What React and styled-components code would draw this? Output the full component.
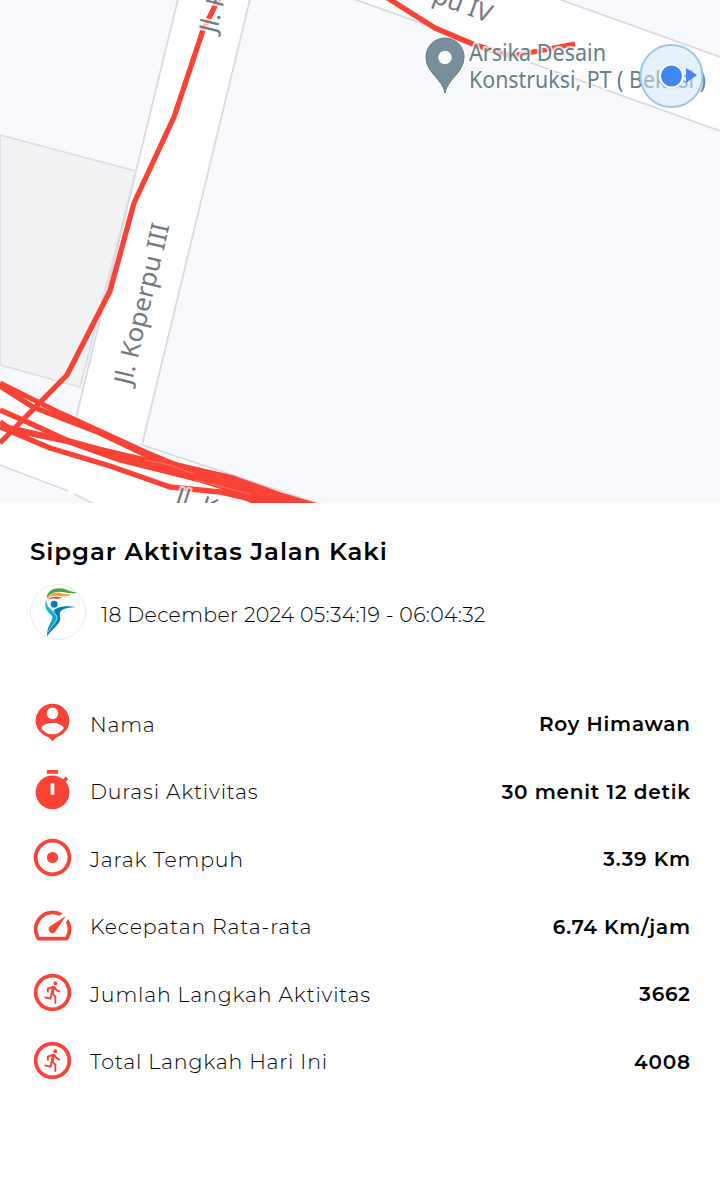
import React from "react";
import styled, { createGlobalStyle } from "styled-components";
import { MdOutlineRunCircle } from "react-icons/md";

const GlobalStyle = createGlobalStyle`
  * { box-sizing: border-box; }
  body { margin: 0; background: #fff; font-family: Montserrat, Inter, "Liberation Sans", sans-serif; color: #000; }
`;

const Screen = styled.main`
  display: flex;
  flex-direction: column;
  width: 720px;
  height: 1202px;
  overflow: hidden;
  background: #fff;
`;

const MapArea = styled.svg`
  display: block;
  flex: none;
  width: 720px;
  height: 503px;
  background: #f8f9fc;
`;

const Details = styled.section`
  display: flex;
  flex-direction: column;
  padding: 32px 30px 0;
`;

const Title = styled.h1`
  margin: 0;
  height: 32px;
  font-size: 24.5px;
  line-height: 32px;
  font-weight: 600;
  letter-spacing: 0.9px;
  white-space: nowrap;
`;

const Session = styled.div`
  display: flex;
  align-items: center;
  gap: 15px;
  height: 56px;
  margin-top: 17px;
`;

const Avatar = styled.svg`
  flex: none;
  width: 56px;
  height: 56px;
`;

const SessionTime = styled.span`
  padding-top: 4px;
  font-size: 20.5px;
  font-weight: 300;
  letter-spacing: ${(p) => p.$spacing}px;
  white-space: nowrap;
`;

const Stats = styled.ul`
  display: flex;
  flex-direction: column;
  gap: 22.5px;
  margin: 60px 0 0;
  padding: 0;
  list-style: none;
`;

const Stat = styled.li`
  display: flex;
  align-items: center;
  height: 45px;
`;

const IconBox = styled.span`
  display: flex;
  flex: none;
  width: 45px;
  height: 45px;
  margin-right: 15px;
  color: #f94336;
  svg { width: 45px; height: 45px; fill: currentColor; }
`;

const Label = styled.span`
  padding-top: 3px;
  font-size: 20.5px;
  font-weight: 300;
  letter-spacing: ${(p) => p.$spacing}px;
  white-space: nowrap;
`;

const Value = styled.span`
  margin-left: auto;
  padding-top: 3px;
  font-size: 20px;
  font-weight: 600;
  letter-spacing: ${(p) => p.$spacing}px;
  margin-right: ${(p) => -p.$spacing}px;
  white-space: nowrap;
`;

const PersonIcon = () => (
  <svg viewBox="0 0 24 24">
    <path fillRule="evenodd" d="M12 2a9 9 0 0 0-9 9c0 4.2 2.9 7.6 6.9 8.8L12 22l2.1-2.2C18.100 18.600 21 15.200 21 11a9 9 0 0 0-9-9ZM12 4a3 3 0 1 1 0 6.200A3 3 0 0 1 12 4ZM12 12.200c2.700 0 5.700 1.100 6 2.800-1.300 2-3.500 3.300-6 3.300S7.300 17 6 15c.3-1.700 3.300-2.800 6-2.800Z" />
  </svg>
);

const TimerIcon = () => (
  <svg viewBox="0 0 24 24">
    <path d="M19.030 7.390 20.450 5.970C20 5.460 19.550 5 19.040 4.560L17.620 6C16.070 4.740 14.120 4 12 4a9 9 0 1 0 9 9c0-2.120-.74-4.070-1.970-5.610ZM13 14.200h-2V8.100h2ZM15 1H9v2h6Z" fillRule="evenodd" />
  </svg>
);

const DistanceIcon = () => (
  <svg viewBox="0 0 24 24">
    <path fillRule="evenodd" d="M12 2a10 10 0 1 0 0 20 10 10 0 0 0 0-20Zm0 18a8 8 0 1 1 0-16 8 8 0 0 1 0 16Z" />
    <circle cx="12" cy="12" r="3" />
  </svg>
);

const SpeedIcon = () => (
  <svg viewBox="0 0 24 24">
    <path d="M20.380 8.570l-1.230 1.850a8 8 0 0 1-.22 7.580H5.070A8 8 0 0 1 15.580 6.850l1.850-1.230A10 10 0 0 0 3.350 19a2 2 0 0 0 1.720 1h13.850a2 2 0 0 0 1.740-1 10 10 0 0 0-.27-10.440Z" />
    <path d="M10.590 15.410a2 2 0 0 0 2.830 0l5.660-8.490-8.490 5.660a2 2 0 0 0 0 2.830Z" />
  </svg>
);

const Logo = () => (
  <Avatar viewBox="0 0 56 56">
    <defs>
      <linearGradient id="body" x1="0" y1="0" x2="0" y2="1">
        <stop offset="0" stopColor="#20bfd3" />
        <stop offset="0.5" stopColor="#12aaca" />
        <stop offset="1" stopColor="#0876b7" />
      </linearGradient>
    </defs>
    <circle cx="28" cy="28" r="27.600" fill="#fff" stroke="#e2e2e2" strokeWidth="0.7" />
    <path d="M16.500 14C17 8 22 4 30 4.200c6 .1 9 3.600 17 4.200-7 2.200-12-.7-18-.6-5 .2-9 2-12.500 6.200Z" fill="#43a548" />
    <path d="M16.500 15c3-4.500 8-7 13.500-6.300 4 .6 7 2.300 11.500 1.300-4 3.400-8 2.400-12 1.900-5-.7-9 .3-13 3.100Z" fill="#f2a42e" />
    <path d="M17 15.500c4-3 8-3.300 15-2.200-3 2-5.500 1.500-8 1.200-2.500-.3-4.500.1-7 1Z" fill="#e53d37" />
    <circle cx="24.200" cy="20.200" r="3.500" fill="#087fbd" />
    <path d="M16.200 15.500c-2.500 7 .2 11.500 5.400 16 2.400 2.700-1.300 6.800-3.100 11.500-1 3-1.500 6-1.500 9.500 2-3.800 5-5.500 8.200-9.400 4-4.800 4.700-8.900 1.800-12.900C23 25 16.500 24 16.200 15.500Z" fill="url(#body)" />
    <path d="M24 26c4-3.300 13-5 22-3-7 .5-12.500 1.100-15.500 4.500-1.500 2-.4 5.500-.3 7.500C30 40 24 43 18.500 49c3-6 9-9.500 9-14 0-3-2.500-5-3.500-9Z" fill="#0878b6" />
    <path d="M17.500 21c2 5 8 7.500 9.500 11.500s-6 9-8.500 15" fill="none" stroke="#dff6fb" strokeWidth="0.7" />
  </Avatar>
);

const mapFont = '"Noto Sans", Roboto, sans-serif';

const RoadLabel = styled.text`
  font-family: ${mapFont};
  font-size: 25px;
  fill: #73797f;
  stroke: #fff;
  stroke-width: 4px;
  stroke-opacity: 0.75;
  stroke-linejoin: round;
  paint-order: stroke;
`;

const PlaceLabel = styled(RoadLabel)`
  font-size: 23.5px;
  fill: #647e8b;
`;

const RouteMap = () => (
  <MapArea viewBox="0 0 720 503">
    <path d="M0 135 136 171 80 387 0 365Z" fill="#f1f3f4" stroke="#dadce0" strokeWidth="1.500" />
    <path d="M178-1 76 418 0 382V466L110 510H330L142 445 250-1Z" fill="#fff" />
    <path d="M340-6 720 131V57L550-4Z" fill="#fff" />
    <g fill="none" stroke="#d9dadf" strokeWidth="1.800">
      <path d="M178-1 76 418M250-1 142 445 320 504M0 465 68 491M74 494 94 504" />
      <path d="M340-6 720 131M550-4 720 57" />
    </g>
    <g fill="none" stroke="#f94336" strokeWidth="5.300" strokeLinejoin="round">
      <path d="M222-8 203 30 174 117 134 203 110 291 67 375 0 443" />
      <path d="M0 383 60 413 145 452 185 469 240 487 290 507" />
      <path d="M0 386 33 407 100 433 148 456 220 478 320 507" />
      <path d="M0 410 25 421 75 444 120 460 200 480 290 507" />
      <path d="M0 422 12 430 60 440 146 460 230 482 320 507" />
      <path d="M0 427 50 448 110 466 170 487 220 492 280 506" />
      <path d="M6 427 70 441 120 455 180 474 260 496" />
      <path d="M386-3 435 28 475 45 512 56 575 44" />
    </g>
    <path d="M145 458 180 463 232 475 280 492 322 505H255L205 482Z" fill="#f94336" />
    <path d="M145 460 170 465 194 474M195 480 250 494" stroke="#fb8a81" strokeWidth="0.700" fill="none" />
    <RoadLabel transform="translate(131 386) rotate(-76.500)" textLength="165" lengthAdjust="spacingAndGlyphs">Jl. Koperpu III</RoadLabel>
    <RoadLabel transform="translate(216 34) rotate(-76)">Jl. K</RoadLabel>
    <RoadLabel transform="translate(174 504) rotate(18)">Jl. Koperpu</RoadLabel>
    <RoadLabel transform="translate(365 -22) rotate(20)">Koperpu IV</RoadLabel>
    <path d="M445 93C442 78 426 73 426 57a19 19 0 0 1 38 0c0 16-16 21-19 36Z" fill="#778f9b" stroke="#607b88" strokeWidth="1" />
    <circle cx="445" cy="57.500" r="6.700" fill="#fff" />
    <PlaceLabel x="469" y="61" textLength="137" lengthAdjust="spacingAndGlyphs">Arsika Desain</PlaceLabel>
    <PlaceLabel x="469" y="88" textLength="237" lengthAdjust="spacingAndGlyphs">Konstruksi, PT ( Bekasi )</PlaceLabel>
    <circle cx="671.500" cy="76" r="31" fill="#d2e8f8" fillOpacity="0.55" stroke="#9cc7ec" strokeWidth="2" />
    <path d="M686 68 697 75 686 83Z" fill="#4285f4" />
    <circle cx="671.500" cy="76.500" r="13.500" fill="#90a0b5" fillOpacity="0.15" />
    <circle cx="671.500" cy="76" r="11.500" fill="#4285f4" stroke="#fff" strokeWidth="2" />
  </MapArea>
);

const stats = [
  { icon: PersonIcon, label: "Nama", value: "Roy Himawan", ls: 0.8, vs: 0.8 },
  { icon: TimerIcon, label: "Durasi Aktivitas", value: "30 menit 12 detik", ls: 0.8, vs: 0.8 },
  { icon: DistanceIcon, label: "Jarak Tempuh", value: "3.39 Km", ls: 0.8, vs: 0.8 },
  { icon: SpeedIcon, label: "Kecepatan Rata-rata", value: "6.74 Km/jam", ls: 0.8, vs: 0.8 },
  { icon: MdOutlineRunCircle, label: "Jumlah Langkah Aktivitas", value: "3662", ls: 0.8, vs: 0.8 },
  { icon: MdOutlineRunCircle, label: "Total Langkah Hari Ini", value: "4008", ls: 0.8, vs: 0.8 },
];

export default function App() {
  return (
    <Screen>
      <GlobalStyle />
      <RouteMap />
      <Details>
        <Title>Sipgar Aktivitas Jalan Kaki</Title>
        <Session>
          <Logo />
          <SessionTime $spacing={0.3}>18 December 2024 05:34:19 - 06:04:32</SessionTime>
        </Session>
        <Stats>
          {stats.map(({ icon: Icon, label, value, ls, vs }) => (
            <Stat key={label}>
              <IconBox><Icon /></IconBox>
              <Label $spacing={ls}>{label}</Label>
              <Value $spacing={vs}>{value}</Value>
            </Stat>
          ))}
        </Stats>
      </Details>
    </Screen>
  );
}
